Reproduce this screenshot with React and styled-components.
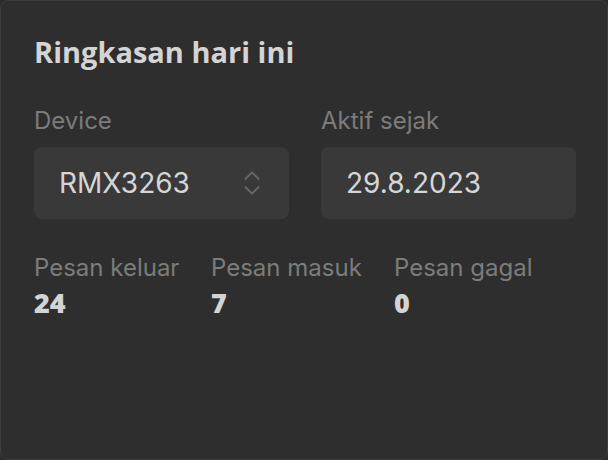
import React from "react";
import styled, { createGlobalStyle } from "styled-components";
import { ChevronsUpDown } from "lucide-react";

const Global = createGlobalStyle`
  html, body {
    margin: 0;
    padding: 0;
    background: #2b2b2b;
  }
  * { box-sizing: border-box; }
`;

const Card = styled.section`
  width: 608px;
  height: 460px;
  background: #2e2e2e;
  border: 1px solid #3d3d3d;
  border-radius: 8px;
  padding: 34px 31px 0 33px;
  display: flex;
  flex-direction: column;
  font-family: Inter, "Liberation Sans", sans-serif;
`;

const Title = styled.h2`
  margin: 0;
  font-family: "Open Sans", "Liberation Sans", sans-serif;
  font-weight: 700;
  font-size: 29px;
  line-height: 34px;
  color: #d4d4d4;
`;

const Fields = styled.div`
  display: grid;
  grid-template-columns: 1fr 1fr;
  gap: 32px;
  margin-top: 37px;
`;

const Field = styled.div`
  display: flex;
  flex-direction: column;
`;

const Label = styled.div`
  font-size: 24px;
  line-height: 29px;
  color: #7c7c7c;
`;

const Box = styled.div`
  margin-top: 12px;
  height: 72px;
  background: #393939;
  border-radius: 8px;
  display: flex;
  align-items: center;
  justify-content: space-between;
  padding: 0 21px 0 25px;
  font-size: 28px;
  color: #d6d6d6;
  svg { color: #666; }
`;

const Stats = styled.div`
  display: flex;
  margin-top: 34px;
`;

const Stat = styled.div`
  width: ${({ $w }) => $w}px;
  display: flex;
  flex-direction: column;
`;

const Value = styled.div`
  margin-top: 4px;
  font-family: "Open Sans", "Liberation Sans", sans-serif;
  font-weight: 800;
  font-size: 27px;
  line-height: 34px;
  color: #d4d4d4;
`;

export default function App() {
  return (
    <>
      <Global />
      <Card>
        <Title>Ringkasan hari ini</Title>
        <Fields>
          <Field>
            <Label>Device</Label>
            <Box>
              RMX3263
              <ChevronsUpDown size={32} strokeWidth={1.4} />
            </Box>
          </Field>
          <Field>
            <Label>Aktif sejak</Label>
            <Box>29.8.2023</Box>
          </Field>
        </Fields>
        <Stats>
          <Stat $w={177}>
            <Label>Pesan keluar</Label>
            <Value>24</Value>
          </Stat>
          <Stat $w={183}>
            <Label>Pesan masuk</Label>
            <Value>7</Value>
          </Stat>
          <Stat $w={180}>
            <Label>Pesan gagal</Label>
            <Value>0</Value>
          </Stat>
        </Stats>
      </Card>
    </>
  );
}
